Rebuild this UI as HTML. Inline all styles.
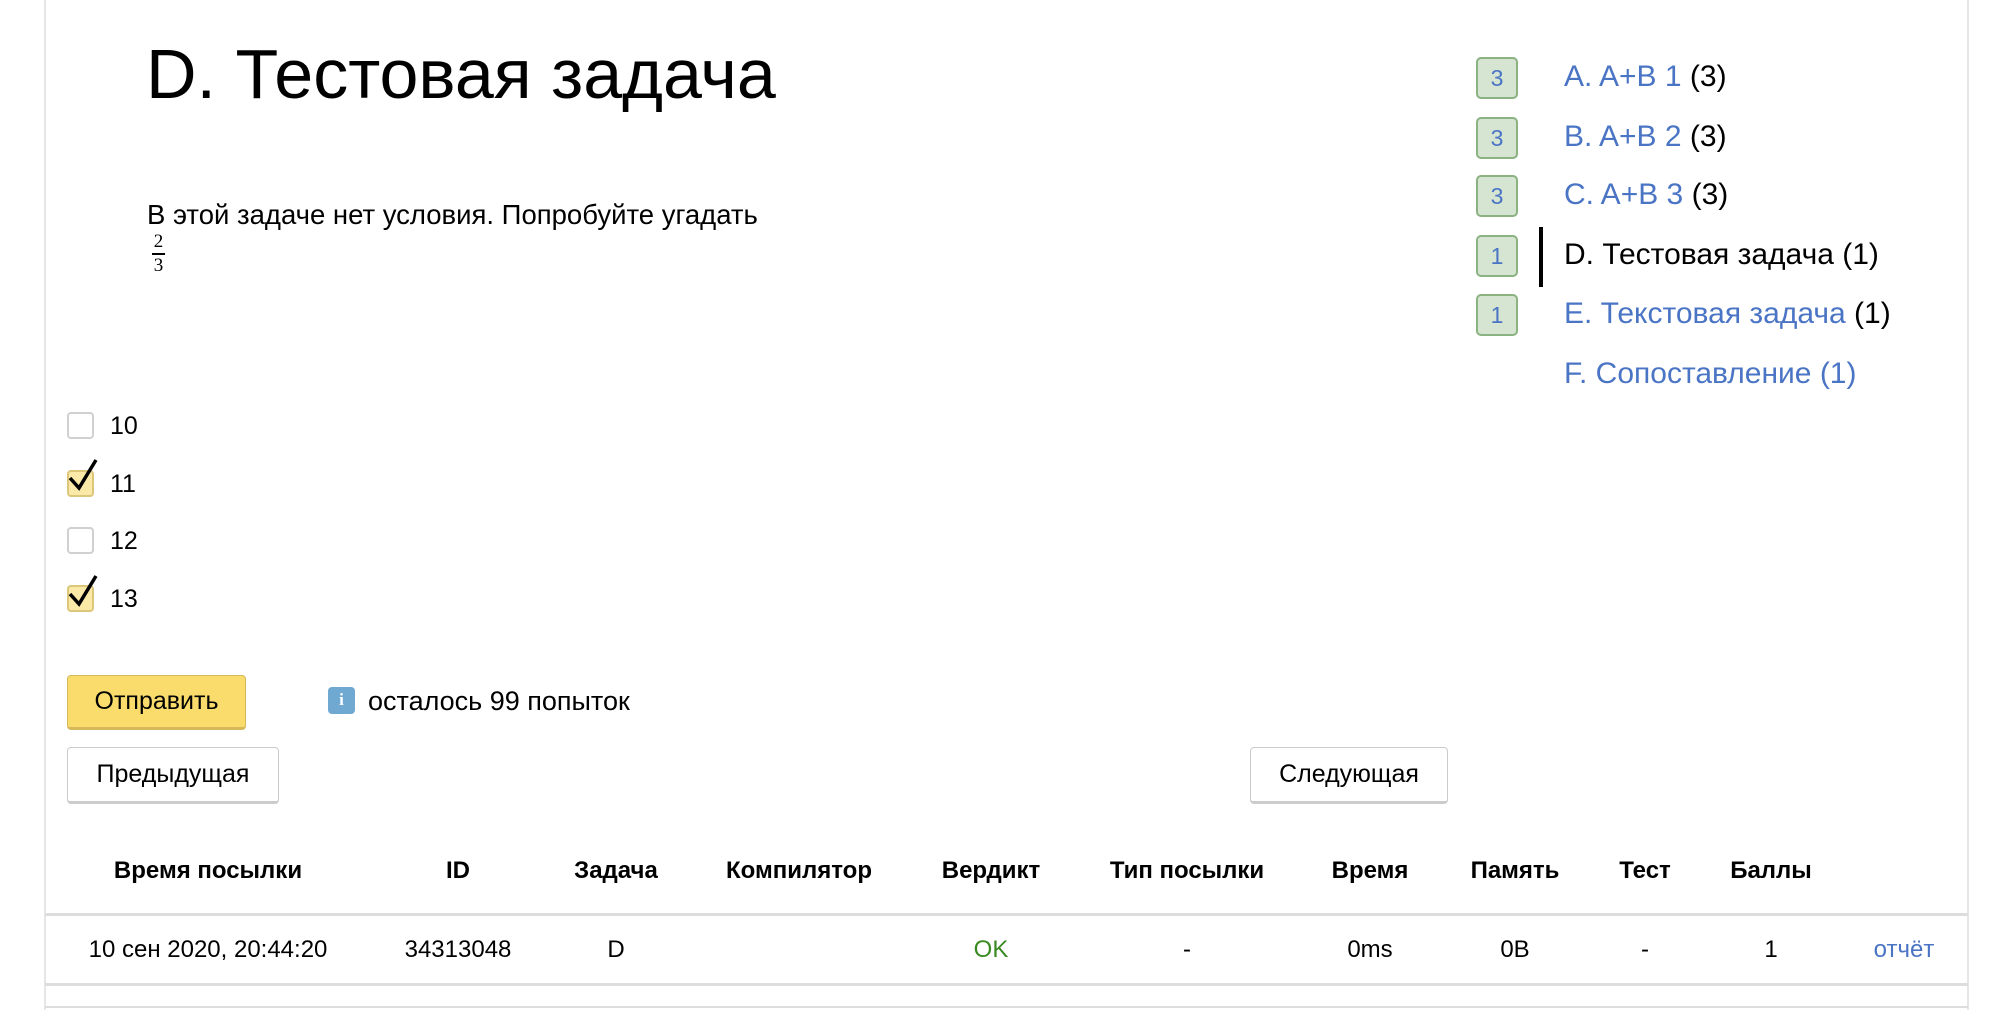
<!DOCTYPE html>
<html><head><meta charset="utf-8"><style>
body{margin:0;width:1998px;height:1022px;background:#fff;font-family:"Liberation Sans",Arial,sans-serif;color:#000;position:relative;overflow:hidden}
.a{position:absolute;white-space:nowrap}
.vl{position:absolute;top:0;width:2px;background:#e6e6e6}
.hl{position:absolute;left:45px;width:1923px;height:3px;background:#ddd}
.cb{position:absolute;left:67px;width:23px;height:23px;border:2px solid #d0d0d0;border-radius:4px;background:#fff}
.cb.on{background:#fbe9a8;border-color:#dcc67a}
.lbl{position:absolute;left:110px;font-size:25px}
.btn{position:absolute;border:1px solid #ccc;border-bottom:3px solid #ccc;border-radius:4px;background:#fff;font-size:25px;display:flex;align-items:center;justify-content:center;box-sizing:border-box}
.bd{position:absolute;left:1476px;width:38px;height:38px;background:#d6e4d2;border:2px solid #8ab381;border-radius:5px;color:#4a74c4;font-size:23px;display:flex;align-items:center;justify-content:center}
.nv{position:absolute;left:1564px;font-size:30px;color:#000}
.nv b{font-weight:normal;color:#4a74c4}
.th{position:absolute;top:857px;font-size:24px;font-weight:bold;transform:translateX(-50%)}
.td{position:absolute;top:936px;font-size:24px;transform:translateX(-50%)}
</style></head><body>
<div class="vl" style="left:44px;height:1010px"></div>
<div class="vl" style="left:1967px;height:1010px"></div>

<div class="a" style="left:146px;top:34px;font-size:70px">D. Тестовая задача</div>
<div class="a" style="left:147px;top:199px;font-size:27.5px">В этой задаче нет условия. Попробуйте угадать</div>
<div class="a" style="left:152px;top:232px;font-size:19px;font-family:'Liberation Serif',serif;text-align:center;line-height:20px">2<div style="border-top:2px solid #000;width:13px;margin:1px 0"></div>3</div>

<div class="cb" style="top:412px"></div><div class="lbl" style="top:412px">10</div>
<div class="cb on" style="top:470px"></div><div class="lbl" style="top:470px">11</div>
<div class="cb" style="top:527px"></div><div class="lbl" style="top:527px">12</div>
<div class="cb on" style="top:585px"></div><div class="lbl" style="top:585px">13</div>
<svg class="a" style="left:66px;top:458px" width="36" height="36"><path d="M4 20 L13 30 L30 2" fill="none" stroke="#000" stroke-width="3.5"/></svg>
<svg class="a" style="left:66px;top:574px" width="36" height="36"><path d="M4 20 L13 30 L30 2" fill="none" stroke="#000" stroke-width="3.5"/></svg>

<div class="btn" style="left:67px;top:675px;width:179px;height:55px;background:#f9dc6c;border-color:#d4b85a">Отправить</div>
<div class="a" style="left:328px;top:687px;width:27px;height:27px;background:#6fa8d0;border-radius:4px;color:#fff;font-size:17px;font-family:'Liberation Serif',serif;text-align:center;line-height:26px;font-weight:bold">i</div>
<div class="a" style="left:368px;top:686px;font-size:27px">осталось 99 попыток</div>

<div class="btn" style="left:67px;top:747px;width:212px;height:57px">Предыдущая</div>
<div class="btn" style="left:1250px;top:747px;width:198px;height:57px">Следующая</div>

<div class="th" style="left:208px">Время посылки</div>
<div class="th" style="left:458px">ID</div>
<div class="th" style="left:616px">Задача</div>
<div class="th" style="left:799px">Компилятор</div>
<div class="th" style="left:991px">Вердикт</div>
<div class="th" style="left:1187px">Тип посылки</div>
<div class="th" style="left:1370px">Время</div>
<div class="th" style="left:1515px">Память</div>
<div class="th" style="left:1645px">Тест</div>
<div class="th" style="left:1771px">Баллы</div>
<div class="hl" style="top:913px"></div>
<div class="td" style="left:208px">10 сен 2020, 20:44:20</div>
<div class="td" style="left:458px">34313048</div>
<div class="td" style="left:616px">D</div>
<div class="td" style="left:991px;color:#3a8a22">OK</div>
<div class="td" style="left:1187px">-</div>
<div class="td" style="left:1370px">0ms</div>
<div class="td" style="left:1515px">0B</div>
<div class="td" style="left:1645px">-</div>
<div class="td" style="left:1771px">1</div>
<div class="td" style="left:1904px;color:#4a74c4">отчёт</div>
<div class="hl" style="top:983px"></div>
<div class="hl" style="top:1006px;height:2px"></div>

<div class="bd" style="top:57px">3</div><div class="nv" style="top:60px"><b>A. A+B 1</b> (3)</div>
<div class="bd" style="top:117px">3</div><div class="nv" style="top:120px"><b>B. A+B 2</b> (3)</div>
<div class="bd" style="top:175px">3</div><div class="nv" style="top:178px"><b>C. A+B 3</b> (3)</div>
<div class="bd" style="top:235px">1</div><div class="nv" style="top:238px">D. Тестовая задача (1)</div>
<div class="a" style="left:1539px;top:227px;width:4px;height:60px;background:#000"></div>
<div class="bd" style="top:294px">1</div><div class="nv" style="top:297px"><b>E. Текстовая задача</b> (1)</div>
<div class="nv" style="top:357px"><b>F. Сопоставление (1)</b></div>
</body></html>
